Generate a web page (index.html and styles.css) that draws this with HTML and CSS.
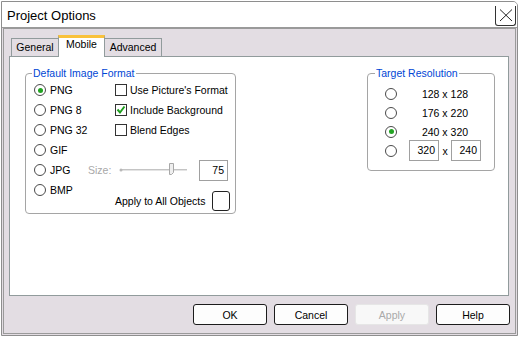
FILE: index.html
```html
<!DOCTYPE html>
<html>
<head>
<meta charset="utf-8">
<link rel="stylesheet" href="styles.css">
</head>
<body>
<div class="window">
  <div class="titlebar">
    <span class="title">Project Options</span>
    <span class="close"><svg width="19" height="19" viewBox="0 0 19 19"><path d="M4 3.5 L16 15 M16 3.5 L4 15" stroke="#222" stroke-width="1" fill="none"/></svg></span>
  </div>
  <div class="content">
    <div class="tabs">
      <span class="tab-gap"></span>
      <span class="tab tab-first">General</span>
      <span class="tab tab-active">Mobile</span>
      <span class="tab tab-last">Advanced</span>
      <span class="tab-fill"></span>
    </div>
    <div class="panel">
      <fieldset class="group g1">
        <legend>Default Image Format</legend>
        <div class="row">
          <span class="cell1"><span class="radio on"></span>PNG</span>
          <span class="chk-item"><span class="chk"></span>Use Picture's Format</span>
        </div>
        <div class="row">
          <span class="cell1"><span class="radio"></span>PNG 8</span>
          <span class="chk-item"><span class="chk"><svg width="10" height="10" viewBox="0 0 10 10"><path d="M1.5 4.5 L4 7.5 L8.5 1.5" stroke="#1f9f1f" stroke-width="2" fill="none"/></svg></span>Include Background</span>
        </div>
        <div class="row">
          <span class="cell1"><span class="radio"></span>PNG 32</span>
          <span class="chk-item"><span class="chk"></span>Blend Edges</span>
        </div>
        <div class="row">
          <span class="cell1"><span class="radio"></span>GIF</span>
        </div>
        <div class="row">
          <span class="cell1 short"><span class="radio"></span>JPG</span>
          <span class="size-label">Size:</span>
          <svg class="slider" width="70" height="16" viewBox="0 0 70 16">
            <line x1="2" y1="7.5" x2="68" y2="7.5" stroke="#c4c4c4" stroke-width="1"/>
            <line x1="2" y1="8.5" x2="68" y2="8.5" stroke="#e4e4e4" stroke-width="1"/>
            <circle cx="2" cy="8" r="1.5" fill="#b8b8b8"/>
            <path d="M50.5 1.5 H54.5 V10.5 L52.5 12.5 H50.5 Z" fill="#efefef" stroke="#a8a8a8" stroke-width="1"/>
          </svg>
          <span class="tb tb-size">75</span>
        </div>
        <div class="row last">
          <span class="cell1"><span class="radio"></span>BMP</span>
          <span class="apply-all">Apply to All Objects<span class="chk big"></span></span>
        </div>
      </fieldset>
      <fieldset class="group g2">
        <legend>Target Resolution</legend>
        <div class="rrow"><span class="radio"></span><span class="res">128 x 128</span></div>
        <div class="rrow"><span class="radio"></span><span class="res">176 x 220</span></div>
        <div class="rrow"><span class="radio on"></span><span class="res">240 x 320</span></div>
        <div class="rrow"><span class="radio"></span><span class="res custom"><span class="tb tb-res">320</span><span class="times">x</span><span class="tb tb-res">240</span></span></div>
      </fieldset>
    </div>
    <div class="buttons">
      <span class="btn">OK</span>
      <span class="btn">Cancel</span>
      <span class="btn disabled">Apply</span>
      <span class="btn">Help</span>
    </div>
  </div>
</div>
</body>
</html>
```
FILE: styles.css
```css
html, body {
  margin: 0;
  padding: 0;
  background: #ffffff;
}
body {
  font-family: "Liberation Sans", Arial, sans-serif;
  font-size: 10.5px;
  color: #000;
  width: 520px;
  height: 337px;
  overflow: hidden;
}
.window {
  box-sizing: border-box;
  width: 517px;
  height: 335px;
  margin: 1px 0 0 1px;
  border: 1px solid #8e8e8e;
  border-top-right-radius: 5px;
  background: #e3dde3;
  display: flex;
  flex-direction: column;
  overflow: hidden;
}
.titlebar {
  height: 25px;
  flex: none;
  background: #fff;
  border-bottom: 1px solid #9a9a9a;
  display: flex;
  justify-content: space-between;
  align-items: flex-start;
  padding: 0 1px 0 5px;
}
.title {
  font-size: 13px;
  line-height: 15px;
  margin-top: 6px;
}
.close {
  box-sizing: border-box;
  width: 21px;
  height: 20px;
  margin-top: 4px;
  border: 1px solid #333;
  border-top: none;
  border-radius: 0 0 3px 3px;
  display: flex;
  align-items: flex-start;
  justify-content: center;
}
.close svg { display: block; }
.content {
  flex: 1;
  margin: 0 1px 1px;
  border: 1px solid #9a9a9a;
  display: flex;
  flex-direction: column;
  padding: 6px 6px 8px 5px;
  min-height: 0;
}
.tabs {
  display: flex;
  align-items: flex-end;
  height: 22px;
  flex: none;
}
.tab-gap {
  width: 2px;
  align-self: stretch;
  border-bottom: 1px solid #919b9c;
  box-sizing: border-box;
}
.tab-fill {
  flex: 1;
  align-self: stretch;
  border-bottom: 1px solid #919b9c;
  box-sizing: border-box;
}
.tab {
  box-sizing: border-box;
  height: 19px;
  border: 1px solid #919b9c;
  text-align: center;
  line-height: 17px;
}
.tab-first {
  width: 47px;
  border-right: none;
}
.tab-active {
  width: 47px;
  height: 22px;
  background: #fff;
  border-bottom: none;
  border-top: 3px solid #f9c23c;
  line-height: 13px;
}
.tab-last {
  width: 57px;
  border-left: none;
}
.panel {
  flex: 1;
  background: #fff;
  border: 1px solid #919b9c;
  border-top: none;
  display: flex;
  justify-content: space-between;
  align-items: flex-start;
  padding: 10px 13px 0 15px;
  min-height: 0;
}
.group {
  margin: 0;
  min-width: 0;
  box-sizing: border-box;
  border: 1px solid #a5a5a5;
  border-radius: 4px;
}
.group legend {
  color: #0046d5;
  line-height: 13px;
  padding: 0 1px;
}
.g1 {
  width: 211px;
  padding: 0 7px 2px 8px;
}
.g1 legend { margin-left: -2px; }
.g2 {
  width: 128px;
  padding: 4px 13px 10px 17px;
}
.g2 legend { margin-left: -10px; }
.row {
  display: flex;
  align-items: center;
  height: 20px;
  white-space: nowrap;
}
.cell1 {
  width: 81px;
  display: flex;
  align-items: center;
  gap: 4px;
  flex: none;
}
.cell1.short { width: 54px; }
.row.last {
  height: 31px;
  align-items: flex-start;
}
.row.last .cell1 { height: 20px; }
.radio {
  box-sizing: border-box;
  width: 12px;
  height: 12px;
  border-radius: 50%;
  border: 1px solid #4a4a4a;
  background: #fff;
  display: inline-flex;
  align-items: center;
  justify-content: center;
  flex: none;
}
.radio.on::after {
  content: "";
  width: 5px;
  height: 5px;
  border-radius: 50%;
  background: #22a322;
}
.chk-item {
  display: flex;
  align-items: center;
  gap: 3px;
}
.chk {
  box-sizing: border-box;
  width: 12px;
  height: 12px;
  border: 1px solid #333;
  background: #fff;
  display: inline-flex;
  align-items: center;
  justify-content: center;
  flex: none;
}
.chk svg { display: block; }
.chk.big {
  width: 18px;
  height: 20px;
  border-color: #222;
  border-radius: 3px;
}
.apply-all {
  margin-left: auto;
  margin-top: 11px;
  display: flex;
  align-items: center;
  gap: 7px;
  white-space: nowrap;
  flex: none;
}
.size-label {
  color: #a8a8a8;
  width: 31px;
  flex: none;
}
.slider {
  display: block;
  flex: none;
}
.tb {
  box-sizing: border-box;
  height: 21px;
  border: 1px solid #a0a0a0;
  background: #fff;
  text-align: right;
  padding-right: 3px;
  line-height: 19px;
  flex: none;
}
.tb-size {
  width: 29px;
  margin-left: auto;
}
.rrow {
  display: flex;
  align-items: center;
  height: 19px;
  white-space: nowrap;
}
.res {
  margin-left: 12px;
  width: 72px;
  display: flex;
  justify-content: center;
  align-items: center;
}
.res.custom { justify-content: space-between; }
.tb-res { width: 30px; }
.buttons {
  display: flex;
  justify-content: flex-end;
  gap: 7px;
  margin-top: 8px;
  margin-right: -1px;
  flex: none;
}
.btn {
  box-sizing: border-box;
  width: 74px;
  height: 21px;
  border: 1px solid #1c1c1c;
  border-radius: 3px;
  background: #fdfdfd;
  display: flex;
  align-items: center;
  justify-content: center;
}
.btn.disabled {
  border-color: #e6e6e6;
  background: #f8f8f8;
  color: #a9a9a9;
}
```
